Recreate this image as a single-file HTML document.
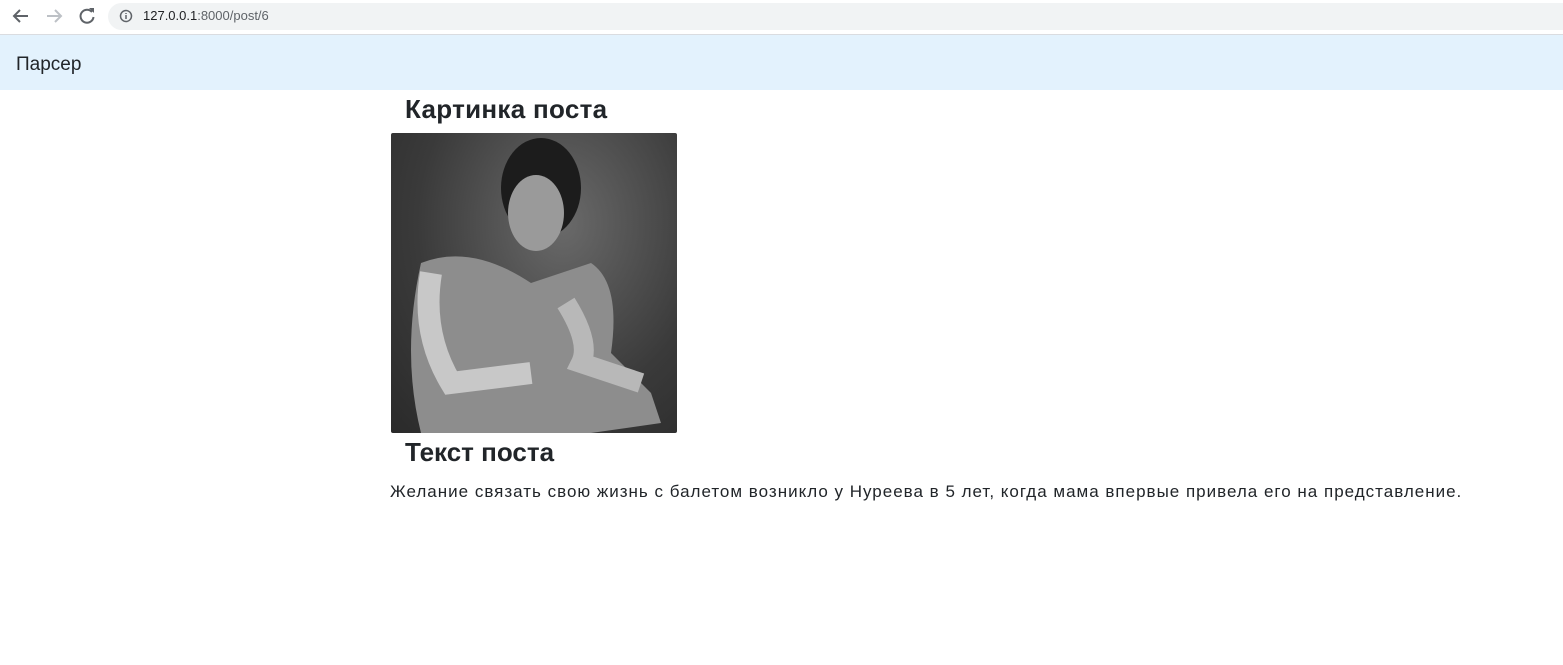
<!DOCTYPE html>
<html><head><meta charset="utf-8"><style>
body{margin:0;width:1563px;height:665px;background:#fff;font-family:"Liberation Sans","DejaVu Sans",sans-serif;color:#212529;position:relative;overflow:hidden}
.chrome{position:absolute;left:0;top:0;width:1563px;height:34px;background:#fff;border-bottom:1px solid #dadce0}
.addr{position:absolute;left:108px;top:3px;width:1470px;height:27px;border-radius:14px;background:#f1f3f4}
.url{position:absolute;left:143px;top:8px;font-size:13px;color:#202124}
.url span{color:#5f6368}
.nav{position:absolute;left:0;top:35px;width:1563px;height:55px;background:#e3f2fd}
.brand{position:absolute;left:16px;top:54px;font-size:19px;color:#212529}
h2{position:absolute;margin:0;font-size:26px;font-weight:bold;left:405px}
.img{position:absolute;left:391px;top:133px;width:286px;height:300px;border-radius:2px;background:radial-gradient(ellipse at 60% 30%,#6a6a6a,#3a3a3a 60%,#2a2a2a)}
p{position:absolute;margin:0;left:390px;top:482px;font-size:17px;letter-spacing:1px;white-space:nowrap}
</style></head><body>
<div class="chrome">
<svg width="110" height="34" style="position:absolute;left:0;top:0">
<path d="M28 16H15M20 10l-6 6 6 6" stroke="#5f6368" stroke-width="2" fill="none"/>
<path d="M47 16h13M55 10l6 6-6 6" stroke="#bdc1c6" stroke-width="2" fill="none"/>
<path d="M92 12a6.5 6.5 0 1 0 1.5 5" stroke="#5f6368" stroke-width="2" fill="none"/><path d="M89 8h5v5z" fill="#5f6368"/>
</svg>
<div class="addr"></div>
<svg width="14" height="14" style="position:absolute;left:119px;top:9px"><circle cx="7" cy="7" r="5.5" stroke="#5f6368" stroke-width="1.5" fill="none"/><path d="M7 6v4M7 4v1" stroke="#5f6368" stroke-width="1.5"/></svg>
<div class="url">127.0.0.1<span>:8000/post/6</span></div>
</div>
<div class="nav"></div>
<div class="brand">Парсер</div>
<h2 style="top:94px;letter-spacing:0.3px">Картинка поста</h2>
<div class="img">
<svg width="286" height="300"><ellipse cx="150" cy="55" rx="40" ry="50" fill="#1c1c1c"/><ellipse cx="145" cy="80" rx="28" ry="38" fill="#9a9a9a"/><path d="M30 130 Q80 110 140 150 L200 130 Q230 150 220 220 L260 260 L270 290 L200 300 L30 300 Q10 220 30 130Z" fill="#8d8d8d"/><path d="M40 140 Q30 200 60 250 L140 240" stroke="#c8c8c8" stroke-width="22" fill="none"/><path d="M175 170 Q200 210 190 230 L250 250" stroke="#b8b8b8" stroke-width="20" fill="none"/></svg>
</div>
<h2 style="top:437px">Текст поста</h2>
<p>Желание связать свою жизнь с балетом возникло у Нуреева в 5 лет, когда мама впервые привела его на представление.</p>
</body></html>
